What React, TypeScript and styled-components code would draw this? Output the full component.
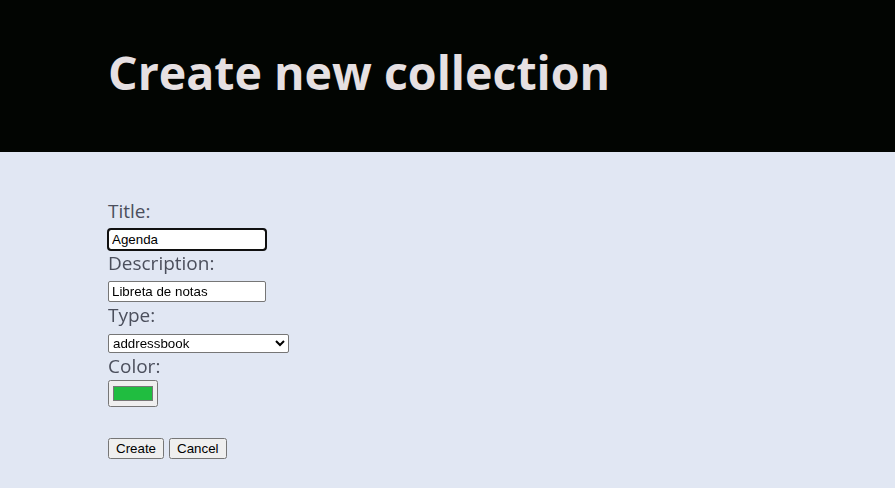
import { createGlobalStyle, styled } from "styled-components";

const GlobalStyle = createGlobalStyle`
  html, body {
    margin: 0;
    padding: 0;
    background: #e1e7f3;
  }
  body {
    font-family: "Open Sans", sans-serif;
  }
`;

const Header = styled.header`
  background: #020502;
  height: 152px;
  display: flex;
  align-items: center;
  padding-left: 108px;
  box-sizing: border-box;
`;

const Heading = styled.h1`
  margin: 0 0 8px 0;
  font-family: "Open Sans", sans-serif;
  font-weight: 700;
  font-size: 46.5px;
  color: #e6e0e2;
`;

const Form = styled.form`
  padding: 46px 0 0 108px;
  display: flex;
  flex-direction: column;
  align-items: flex-start;
`;

const Label = styled.label`
  font-size: 19px;
  line-height: 26px;
  color: #4b4f5c;
`;

const Field = styled.input`
  font-family: "Liberation Sans", Arial, sans-serif;
  font-size: 13.33px;
  width: 158px;
  height: 21px;
  box-sizing: border-box;
  margin: 5px 0 0 0;
  padding: 1px 3px;
  border: 1px solid #767676;
  border-radius: 2px;
  background: #fff;
  color: #000;

  &:focus {
    outline: 2px solid #101010;
    outline-offset: -1px;
    border-radius: 3px;
  }
`;

const Select = styled.select`
  font-family: "Liberation Sans", Arial, sans-serif;
  font-size: 13.33px;
  width: 181px;
  height: 19px;
  margin: 6px 0 0 0;
  border: 1px solid #767676;
  border-radius: 2px;
  background: #fff;
  color: #000;
`;

const ColorInput = styled.input`
  width: 50px;
  height: 27px;
  margin: 1px 0 0 0;
`;

const Actions = styled.div`
  display: flex;
  gap: 5px;
  margin-top: 31px;
`;

const Button = styled.button`
  font-family: "Liberation Sans", Arial, sans-serif;
  font-size: 13.33px;
  height: 21px;
  padding: 1px 6px;
  margin: 0;
`;

export default function App() {
  return (
    <>
      <GlobalStyle />
      <Header>
        <Heading>Create new collection</Heading>
      </Header>
      <Form onSubmit={(e) => e.preventDefault()}>
        <Label htmlFor="title">Title:</Label>
        <Field id="title" type="text" defaultValue="Agenda" autoFocus />
        <Label htmlFor="description">Description:</Label>
        <Field id="description" type="text" defaultValue="Libreta de notas" />
        <Label htmlFor="type">Type:</Label>
        <Select id="type" defaultValue="addressbook">
          <option value="addressbook">addressbook</option>
          <option value="calendar">calendar</option>
        </Select>
        <Label htmlFor="color">Color:</Label>
        <ColorInput id="color" type="color" defaultValue="#20bd40" />
        <Actions>
          <Button type="submit">Create</Button>
          <Button type="button">Cancel</Button>
        </Actions>
      </Form>
    </>
  );
}
